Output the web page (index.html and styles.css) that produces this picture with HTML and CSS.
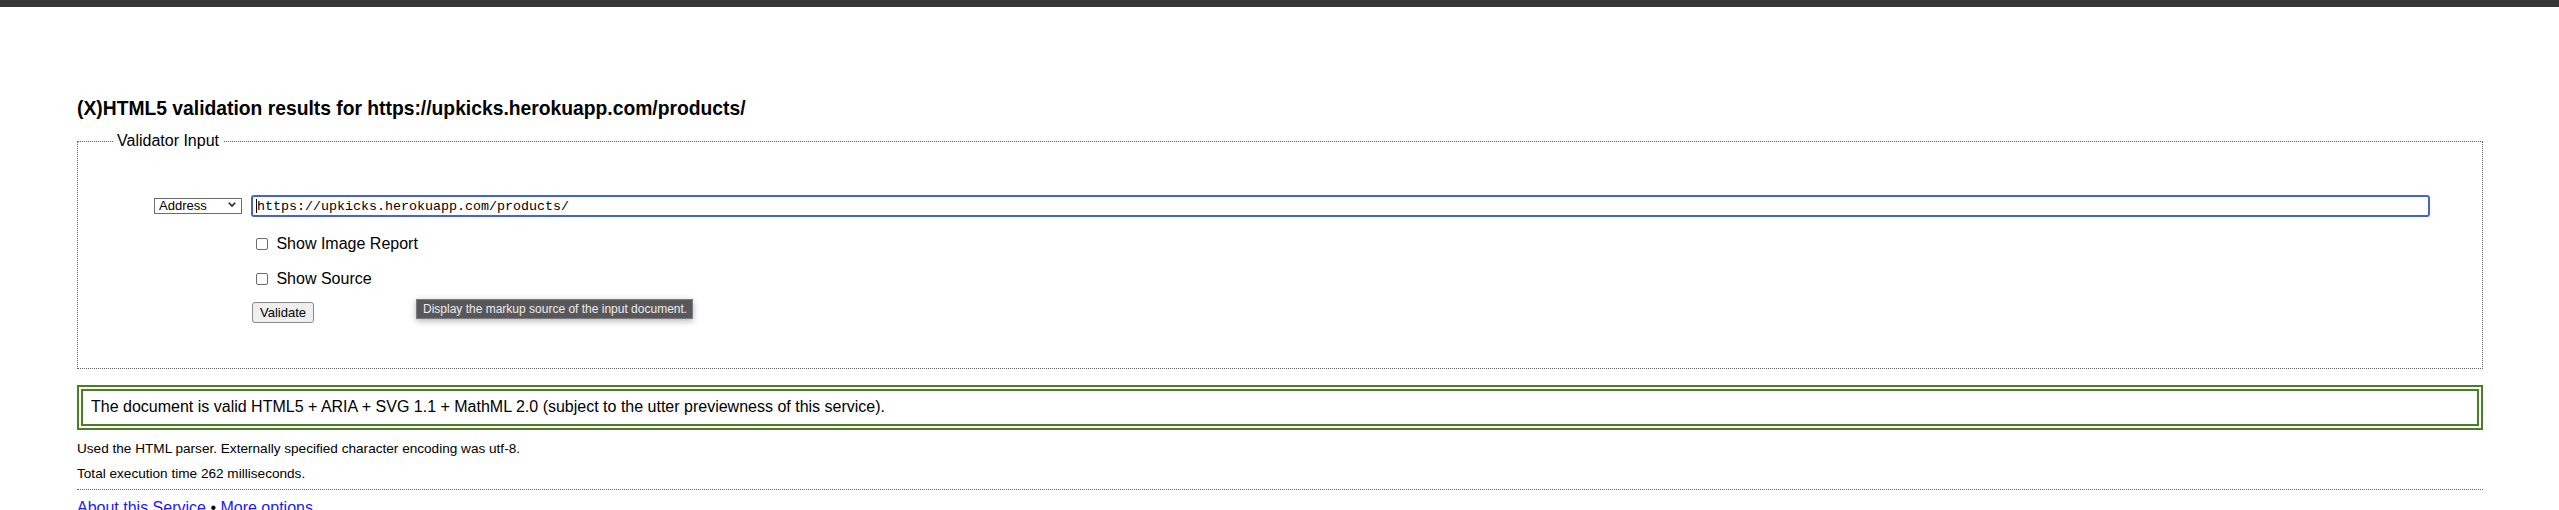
FILE: index.html
```html
<!DOCTYPE html>
<html lang="en">
<head>
<meta charset="utf-8">
<title>Validation results</title>
<link rel="stylesheet" href="styles.css">
</head>
<body>
<div class="topbar"></div>
<main class="page">
  <h2 class="title">(X)HTML5 validation results for https://upkicks.herokuapp.com/products/</h2>
  <form class="form">
    <fieldset class="fs">
      <legend class="legend">Validator Input</legend>
      <div class="rows">
        <div class="row row-doc">
          <div class="sel-wrap">
            <select class="sel"><option>Address</option></select>
            <svg class="chev" width="8" height="5" viewBox="0 0 8 5"><polyline points="0.8,0.8 4,4 7.2,0.8" fill="none" stroke="#222" stroke-width="1.6"/></svg>
          </div>
          <div class="url-wrap">
            <input class="url" type="text" value="https://upkicks.herokuapp.com/products/">
            <span class="caret"></span>
          </div>
        </div>
        <div class="row row-cb1">
          <label class="cb"><input class="box" type="checkbox"> Show Image Report</label>
        </div>
        <div class="row row-cb2">
          <label class="cb"><input class="box" type="checkbox"> Show Source</label>
        </div>
        <div class="row row-btn">
          <button class="btn" type="button">Validate</button>
          <div class="tooltip">Display the markup source of the input document.</div>
        </div>
      </div>
    </fieldset>
  </form>
  <p class="success">The document is valid HTML5 + ARIA + SVG 1.1 + MathML 2.0 (subject to the utter previewness of this service).</p>
  <p class="stats stats1">Used the HTML parser. Externally specified character encoding was utf-8.</p>
  <p class="stats stats2">Total execution time 262 milliseconds.</p>
  <hr class="rule">
  <p class="links"><a href="#">About this Service</a> • <a href="#">More options</a></p>
</main>
</body>
</html>
```
FILE: styles.css
```css
html, body {
  margin: 0;
  padding: 0;
  overflow: hidden;
  background: #fff;
}
body {
  font-family: "Liberation Sans", Arial, sans-serif;
  color: #000;
}
.topbar {
  height: 7px;
  background: #36363a;
}
.page {
  display: flex;
  flex-direction: column;
  padding: 90px 76px 0 77px;
}
.title {
  margin: 0;
  font-size: 19.3px;
  line-height: 23px;
  font-weight: bold;
}
.form {
  margin: 12px 0 0 0;
}
.fs {
  margin: 0;
  min-width: 0;
  border: 1px dotted #666;
  padding: 45px 52px 45px 35px;
}
.legend {
  font-size: 16px;
  line-height: 18px;
  padding: 0 4px;
}
.rows {
  display: flex;
  flex-direction: column;
  padding-left: 41px;
}
.row {
  display: flex;
  align-items: center;
  padding-left: 97px;
}
.row-doc {
  padding-left: 0;
  align-items: flex-start;
  gap: 9px;
  height: 22px;
}
.row-cb1 { margin-top: 18px; height: 18px; }
.row-cb2 { margin-top: 17px; height: 18px; }
.row-btn {
  margin-top: 14px;
  height: 21px;
  position: relative;
}
.sel-wrap {
  position: relative;
  width: 88px;
  height: 16px;
  margin-top: 1px;
  flex: none;
}
.sel {
  appearance: none;
  -webkit-appearance: none;
  box-sizing: border-box;
  width: 88px;
  height: 16px;
  margin: 0;
  border: 1px solid #6b6b6b;
  border-radius: 0;
  background: #fff;
  padding: 0 0 0 4px;
  font-family: "Liberation Sans", Arial, sans-serif;
  font-size: 13px;
  line-height: 14px;
  color: #000;
}
.chev {
  position: absolute;
  left: 74px;
  top: 6px;
  pointer-events: none;
}
.url-wrap {
  position: relative;
  flex: 1;
}
.url {
  box-sizing: border-box;
  display: block;
  width: 100%;
  height: 22px;
  margin: 0;
  border: 2px solid #4765c8;
  border-radius: 3px;
  padding: 0 0 0 4px;
  font-family: "Liberation Mono", "Courier New", monospace;
  font-size: 13.33px;
  color: #000;
  outline: none;
  background: #fff;
}
.caret {
  position: absolute;
  left: 5px;
  top: 4px;
  width: 1px;
  height: 14px;
  background: #000;
}
.cb {
  display: flex;
  align-items: center;
  font-size: 16px;
  line-height: 18px;
  white-space: pre;
}
.box {
  appearance: none;
  -webkit-appearance: none;
  box-sizing: border-box;
  width: 12px;
  height: 12px;
  margin: 0 4px 0 5px;
  border: 1px solid #6e6e6e;
  border-radius: 2px;
  background: #fff;
}
.btn {
  box-sizing: border-box;
  width: 62px;
  height: 21px;
  margin: 0 0 0 1px;
  padding: 0;
  border: 1px solid #8a8a8a;
  border-radius: 3px;
  background: #efefef;
  font-family: "Liberation Sans", Arial, sans-serif;
  font-size: 13px;
  color: #000;
}
.tooltip {
  position: absolute;
  left: 262px;
  top: -3px;
  box-sizing: border-box;
  height: 20px;
  width: 277px;
  padding: 0 6px;
  background: #58585b;
  border: 1px solid #7d7d80;
  box-shadow: 0 2px 6px rgba(0, 0, 0, 0.3);
  color: #ececec;
  font-size: 12px;
  line-height: 18px;
  white-space: nowrap;
}
.success {
  margin: 16px 0 0 0;
  border: 6px double #4b7d23;
  padding: 7px 8px 8px 8px;
  font-size: 16px;
  line-height: 18px;
}
.stats {
  margin: 0;
  font-size: 13.6px;
  line-height: 15px;
}
.stats1 { margin-top: 11px; }
.stats2 { margin-top: 10px; }
.rule {
  margin: 8px 0 0 0;
  border: 0;
  border-top: 1px dotted #666;
  height: 0;
}
.links {
  margin: 9px 0 0 0;
  font-size: 16px;
  line-height: 18px;
}
.links a {
  color: #1a1aee;
  text-decoration: none;
}
```
